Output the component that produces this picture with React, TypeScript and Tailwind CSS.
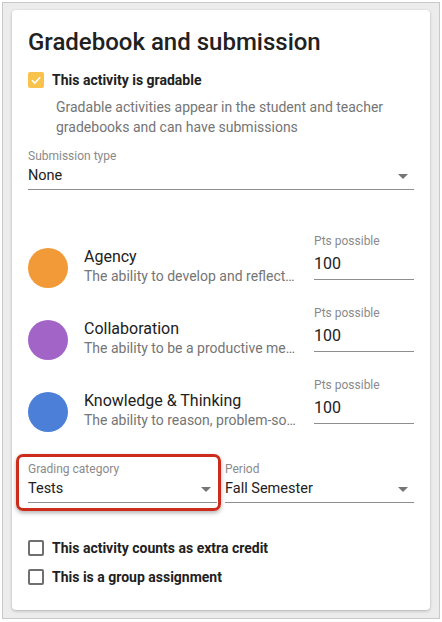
import React from "react";

function Arrow() {
  return (
    <svg width="10" height="5" viewBox="0 0 10 5" className="shrink-0 mr-[6px]">
      <path d="M0 0 L10 0 L5 5 Z" fill="#757575" />
    </svg>
  );
}

function SelectField({ label, value }: { label: string; value: string }) {
  return (
    <div className="flex flex-col border-b border-[#8e8e8e] pb-[2px]">
      <div className="h-[14px] leading-[14px] text-[12px] text-[#8a8a8a]">{label}</div>
      <div className="mt-[2px] h-[22px] flex items-center justify-between">
        <span className="text-[14.5px] text-[#212121] leading-[22px]">{value}</span>
        <Arrow />
      </div>
    </div>
  );
}

function Competency({ color, title, desc }: { color: string; title: string; desc: string }) {
  return (
    <div className="flex h-[72px] items-start">
      <div className="mt-[14px] w-[40px] h-[40px] rounded-full shrink-0" style={{ backgroundColor: color }} />
      <div className="ml-[16px] w-[214px] min-w-0 mt-[13px]">
        <div className="text-[16px] leading-[20px] text-[#212121] truncate">{title}</div>
        <div className="text-[14px] leading-[19px] text-[#757575] truncate">{desc}</div>
      </div>
      <div className="ml-auto w-[100px] flex flex-col border-b border-[#8e8e8e] pb-[4px]">
        <div className="h-[14px] leading-[14px] text-[12px] text-[#8a8a8a]">Pts possible</div>
        <div className="mt-[5px] h-[22px] leading-[22px] text-[16px] text-[#212121]">100</div>
      </div>
    </div>
  );
}

function EmptyBox() {
  return <div className="w-[16px] h-[16px] rounded-[2px] border-2 border-[#6f6f6f] shrink-0" />;
}

export default function App() {
  return (
    <div
      className="w-[442px] h-[622px] bg-white pt-[2px] pl-[2px]"
      style={{ fontFamily: "Roboto, 'Noto Sans', sans-serif" }}
    >
      <div className="w-[438px] h-[617px] border border-[#c9c9c9] bg-[#ececec] pl-[9px] pt-[7px]">
        <div className="w-[418px] h-[600px] bg-white rounded-[4px] shadow-[0_1px_3px_rgba(0,0,0,0.25)] px-4 pt-4 flex flex-col">
          <h1 className="text-[24px] leading-[32px] font-medium text-[#212121]">Gradebook and submission</h1>

          <div className="mt-[10px] h-[24px] flex items-center">
            <div className="w-[16px] h-[16px] rounded-[2px] bg-[#F8C24D] flex items-center justify-center">
              <svg width="12" height="12" viewBox="0 0 12 12">
                <path d="M2 6.2 L4.8 9 L10.2 3.3" fill="none" stroke="white" strokeWidth="1.6" />
              </svg>
            </div>
            <span className="ml-[8px] text-[14px] font-bold text-[#212121]">This activity is gradable</span>
          </div>

          <p className="mt-[5px] ml-[28px] text-[14px] leading-[20px] text-[#757575] w-[340px]">
            Gradable activities appear in the student and teacher gradebooks and can have submissions
          </p>

          <div className="mt-[12px]">
            <SelectField label="Submission type" value="None" />
          </div>

          <div className="mt-[44px] flex flex-col">
            <Competency color="#F29A37" title="Agency" desc="The ability to develop and reflect on one's own learning" />
            <Competency color="#A265C7" title="Collaboration" desc="The ability to be a productive member of a team" />
            <Competency color="#4B7FD8" title="Knowledge & Thinking" desc="The ability to reason, problem-solve and think critically" />
          </div>

          <div className="mt-[12px] grid grid-cols-2 gap-x-2">
            <div className="relative">
              <div className="absolute left-[-12px] right-[-4px] top-[-8px] bottom-[-8px] rounded-[7px] border-[3px] border-[#CC2C1C] shadow-[0_2px_4px_rgba(0,0,0,0.3)] pointer-events-none" />
              <SelectField label="Grading category" value="Tests" />
            </div>
            <SelectField label="Period" value="Fall Semester" />
          </div>

          <div className="mt-[33px] flex flex-col gap-[5px]">
            <div className="h-[24px] flex items-center">
              <EmptyBox />
              <span className="ml-[8px] text-[14px] font-bold text-[#212121]">This activity counts as extra credit</span>
            </div>
            <div className="h-[24px] flex items-center">
              <EmptyBox />
              <span className="ml-[8px] text-[14px] font-bold text-[#212121]">This is a group assignment</span>
            </div>
          </div>
        </div>
      </div>
    </div>
  );
}
